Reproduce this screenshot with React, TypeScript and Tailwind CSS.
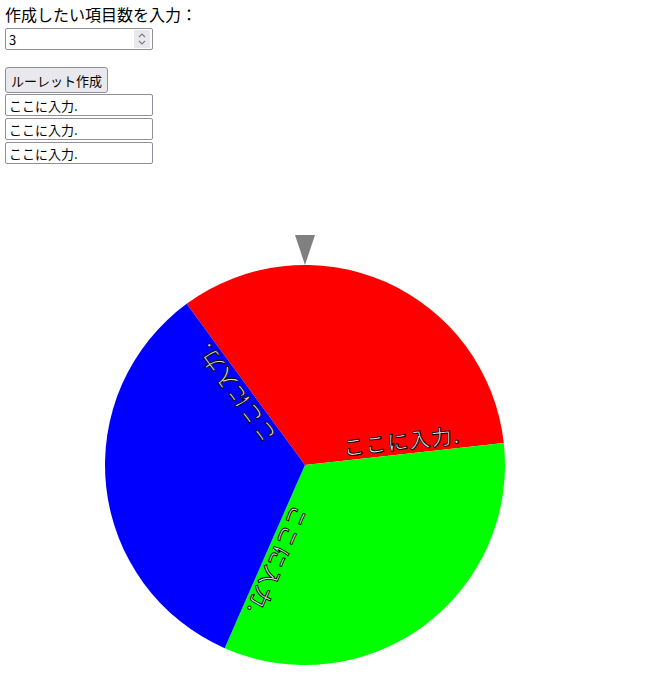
import React from 'react';

const CX = 305;
const CY = 301;
const R = 200;
const OFFSET = -126.3;

const slices = [
  { color: '#ff0000', label: 'ここに入力.' },
  { color: '#00ff00', label: 'ここに入力.' },
  { color: '#0000ff', label: 'ここに入力.' },
];

function pt(deg: number, r: number): [number, number] {
  const a = (deg * Math.PI) / 180;
  return [CX + r * Math.cos(a), CY + r * Math.sin(a)];
}

function Roulette() {
  const step = 360 / slices.length;
  return (
    <svg width={663} height={524} className="block">
      {slices.map((s, i) => {
        const a0 = OFFSET + step * i;
        const a1 = a0 + step;
        const [x0, y0] = pt(a0, R);
        const [x1, y1] = pt(a1, R);
        return (
          <path
            key={i}
            d={`M${CX} ${CY} L${x0} ${y0} A${R} ${R} 0 0 1 ${x1} ${y1} Z`}
            fill={s.color}
          />
        );
      })}
      {slices.map((s, i) => {
        const a1 = OFFSET + step * (i + 1);
        return (
          <text
            key={'t' + i}
            transform={`translate(${CX} ${CY}) rotate(${a1})`}
            x={40}
            y={-5}
            fontSize={21}
            letterSpacing={1}
            fontFamily='"Noto Sans CJK JP", sans-serif'
            fontWeight={500}
            fill="#d8d8d8"
            stroke="#000000"
            strokeWidth={0.9}
          >
            {s.label}
          </text>
        );
      })}
      <polygon points="295,71 315,71 305,101" fill="#808080" />
    </svg>
  );
}

export default function App() {
  const inputCls =
    'block w-[148px] h-[22px] px-[3px] border border-[#8f8f9d] rounded-[2px] bg-white text-[13px] text-black outline-none';
  return (
    <div className="bg-white min-h-[688px] font-['Noto_Sans_CJK_JP',sans-serif] text-black">
      <div className="px-[5px] h-[164px]">
        <div className="h-[28px] leading-[28px] text-[16px]">作成したい項目数を入力：</div>
        <div className="relative w-[148px]">
          <input type="text" defaultValue="3" className={inputCls} />
          {/* spin buttons */}
          <div className="absolute right-[3px] top-[2px] w-[16px] h-[18px] bg-[#e9e9ed] flex flex-col items-center justify-center">
            <svg width="10" height="14" viewBox="0 0 10 14" fill="none" stroke="#7a7a80" strokeWidth="1.1">
              <path d="M2 5 L5 2 L8 5" />
              <path d="M2 9 L5 12 L8 9" />
            </svg>
          </div>
        </div>
        <div className="h-[17px]" />
        <button className="block h-[26px] px-[5px] border border-[#8f8f9d] rounded-[3px] bg-[#e9e9ed] text-[13px] leading-none">
          ルーレット作成
        </button>
        <div className="flex flex-col gap-[2px] mt-[1px]">
          <input type="text" defaultValue="ここに入力." className={inputCls} />
          <input type="text" defaultValue="ここに入力." className={inputCls} />
          <input type="text" defaultValue="ここに入力." className={inputCls} />
        </div>
      </div>
      <Roulette />
    </div>
  );
}
